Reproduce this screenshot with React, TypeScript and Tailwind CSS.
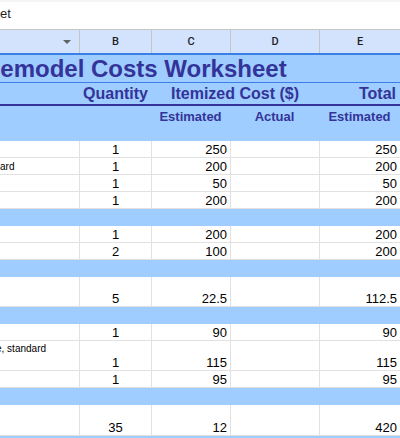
type Row = {
  kind: "data" | "band"
  h: number
  a?: string
  aTop?: boolean
  b?: string
  c?: string
  e?: string
}

const rows: Row[] = [
  { kind: "data", h: 17, b: "1", c: "250", e: "250" },
  { kind: "data", h: 17, a: "ard", b: "1", c: "200", e: "200" },
  { kind: "data", h: 17, b: "1", c: "50", e: "50" },
  { kind: "data", h: 17, b: "1", c: "200", e: "200" },
  { kind: "band", h: 17 },
  { kind: "data", h: 17, b: "1", c: "200", e: "200" },
  { kind: "data", h: 17, b: "2", c: "100", e: "200" },
  { kind: "band", h: 17 },
  { kind: "data", h: 30, b: "5", c: "22.5", e: "112.5" },
  { kind: "band", h: 17 },
  { kind: "data", h: 17, b: "1", c: "90", e: "90" },
  { kind: "data", h: 30, a: "e, standard", aTop: true, b: "1", c: "115", e: "115" },
  { kind: "data", h: 17, b: "1", c: "95", e: "95" },
  { kind: "band", h: 17 },
  { kind: "data", h: 31, b: "35", c: "12", e: "420" },
]

const cols = "grid grid-cols-[79px_72px_79px_89px_81px]"

const DataRow = ({ row }: { row: Row }) => {
  if (row.kind === "band") {
    return <div className="bg-[#9fcdff]" style={{ height: row.h }} />
  }
  return (
    <div className={`${cols} border-b border-[#e1e1e1] bg-white text-[13px] leading-[14px] text-black`} style={{ height: row.h }}>
      <div className={`flex overflow-hidden text-[10px] ${row.aTop ? "items-start pt-[1px]" : "items-end"}`}>
        {row.a && <span className={`whitespace-nowrap ${row.aTop ? "-ml-[4px]" : ""}`}>{row.a}</span>}
      </div>
      <div className="flex items-end justify-center border-l border-[#e1e1e1]">{row.b}</div>
      <div className="flex items-end justify-end border-l border-[#e1e1e1] pr-[3px]">{row.c}</div>
      <div className="border-l border-[#e1e1e1]"></div>
      <div className="flex items-end justify-end border-l border-[#e1e1e1] pr-[3px]">{row.e}</div>
    </div>
  )
}

export default function App() {
  return (
    <div className="w-[400px] h-[438px] overflow-hidden bg-[#9fcdff] font-['Liberation_Sans',Arial,sans-serif]">
      {/* formula bar */}
      <div className="h-[29px] bg-white">
        <div className="h-[2px] bg-[#f3f5f7]" />
        <div className="pt-[4px] text-[13px] leading-[16px] text-[#1f1f1f] whitespace-nowrap">et</div>
      </div>

      {/* column letters */}
      <div className={`${cols} h-[24px] border-t border-[#c4c7c5] bg-[#d3e3fd] font-['Roboto',sans-serif] text-[11px] font-medium leading-[23px] text-[#1f1f1f]`}>
        <div className="flex items-center justify-end pr-[8px]">
          <svg width="8" height="4" viewBox="0 0 8 4">
            <path d="M0 0h8L4 4z" fill="#5f6368" />
          </svg>
        </div>
        <div className="border-l border-[#c4c7c5] text-center">B</div>
        <div className="border-l border-[#c4c7c5] text-center">C</div>
        <div className="border-l border-[#c4c7c5] text-center">D</div>
        <div className="border-l border-[#c4c7c5] text-center">E</div>
      </div>
      <div className="h-[2px] bg-[#3b7fe6]" />

      {/* title */}
      <div className="h-[27px] overflow-hidden pt-[1px] text-[24px] font-bold leading-[26px] text-[#333399] whitespace-nowrap">
        <span className="-ml-[17px]">Remodel Costs Worksheet</span>
      </div>
      <div className="h-px bg-[#3b7fe6]" />

      {/* headings */}
      <div className={`${cols} h-[21px] text-[16px] font-bold leading-[21px] text-[#333399]`}>
        <div />
        <div className="text-right pr-[3px]">Quantity</div>
        <div className="col-span-2 text-center">Itemized Cost ($)</div>
        <div className="text-right pr-[4px]">Total</div>
      </div>
      <div className="h-[2px] bg-[#333399]" />

      <div className={`${cols} h-[35px] pt-[3px] text-[13px] font-bold leading-[15px] text-[#333399]`}>
        <div />
        <div />
        <div className="text-center">Estimated</div>
        <div className="text-center">Actual</div>
        <div className="text-center">Estimated</div>
      </div>

      {rows.map((row, i) => (
        <DataRow key={i} row={row} />
      ))}
    </div>
  )
}
